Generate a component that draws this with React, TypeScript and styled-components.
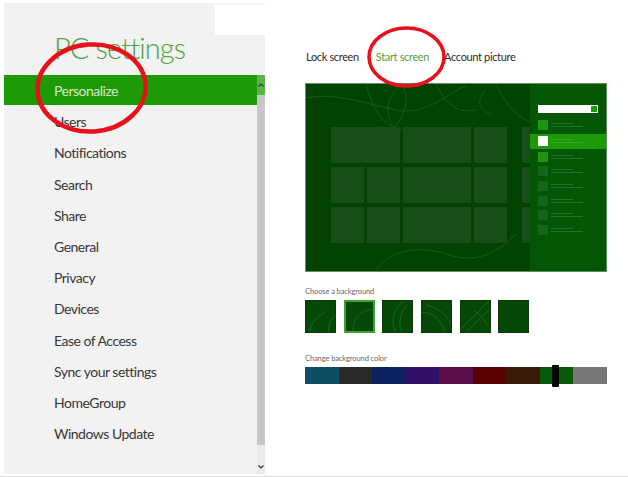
import React from "react";
import styled, { createGlobalStyle, css } from "styled-components";

const GlobalStyle = createGlobalStyle`
  html, body {
    margin: 0;
    padding: 0;
    background: #ffffff;
  }
  #root {
    width: 628px;
    height: 477px;
    overflow: hidden;
  }
`;

const UI_FONT = `"Lato", "Open Sans", "Noto Sans", sans-serif`;

const Page = styled.div`
  position: relative;
  width: 628px;
  height: 477px;
  display: flex;
  align-items: flex-start;
  border-bottom: 1px solid #dcdcdc;
  box-sizing: border-box;
  font-family: ${UI_FONT};
`;

/* ---------- left navigation ---------- */

const Sidebar = styled.aside`
  position: relative;
  margin: 3px 0 0 4px;
  width: 261px;
  height: 471px;
  background: #f2f2f2;
  display: flex;
  flex-direction: column;
`;

const Patch = styled.div`
  position: absolute;
  top: 2px;
  left: 211px;
  width: 52px;
  height: 30px;
  background: #ffffff;
`;

const Title = styled.h1`
  margin: 0;
  height: 72px;
  padding-left: 50px;
  box-sizing: border-box;
  font-family: ${UI_FONT};
  font-weight: 300;
  font-size: 29px;
  letter-spacing: -0.9px;
  line-height: 1;
  color: #4ea43c;
  display: flex;
  align-items: flex-end;
  padding-bottom: 13px;
`;

const NavBody = styled.div`
  flex: 1;
  display: flex;
`;

const NavList = styled.ul`
  flex: 1;
  margin: 0;
  padding: 0;
  list-style: none;
`;

const NavItem = styled.li<{ $active?: boolean }>`
  height: 31.2px;
  display: flex;
  align-items: center;
  padding-left: 50px;
  font-size: 14px;
  letter-spacing: -0.5px;
  color: #383838;
  ${({ $active }) =>
    $active &&
    css`
      background: #1e9a06;
      color: #d2eac6;
      height: 30px;
      margin-bottom: 1.2px;
    `}
`;

const Scrollbar = styled.div`
  width: 8px;
  display: flex;
  flex-direction: column;
  background: #ebebeb;
`;

const ScrollArrow = styled.div<{ $top?: boolean }>`
  height: ${({ $top }) => ($top ? "20px" : "29px")};
  display: flex;
  align-items: ${({ $top }) => ($top ? "center" : "flex-end")};
  justify-content: center;
  padding-bottom: ${({ $top }) => ($top ? "0" : "5px")};
  box-sizing: border-box;
  background: ${({ $top }) => ($top ? "#5fb34c" : "transparent")};

  svg {
    width: 6px;
    height: 4px;
  }
`;

const ScrollThumb = styled.div`
  flex: 1;
  background: #c6c6c6;
`;

/* ---------- right content ---------- */

const Content = styled.main`
  margin-left: 40px;
  padding-top: 48px;
  width: 302px;
  display: flex;
  flex-direction: column;
`;

const Tabs = styled.nav`
  display: flex;
  gap: 17px;
  height: 16px;
  align-items: center;
  margin-bottom: 19px;
  margin-left: 1px;
`;

const Tab = styled.span<{ $active?: boolean }>`
  font-size: 11px;
  letter-spacing: -0.35px;
  color: ${({ $active }) => ($active ? "#4ea43c" : "#2b2b2b")};
  &:nth-child(3) {
    margin-left: -2px;
  }
`;

const Preview = styled.div`
  width: 302px;
  height: 189px;
  display: flex;
  box-sizing: border-box;
  border: 1px solid #5f8f5f;
  overflow: hidden;
`;

const StartArea = styled.div`
  position: relative;
  width: 224px;
  background: #024202;
  overflow: hidden;
  padding: 43px 0 0 25px;
  box-sizing: border-box;
`;

const Swirls = styled.svg`
  position: absolute;
  inset: 0;
  width: 100%;
  height: 100%;
`;

const TileGrid = styled.div`
  position: relative;
  display: grid;
  grid-template-columns: 33px 33px 68px 33px 9px 33px;
  grid-auto-rows: 36px;
  gap: 4px 3px;
`;

const Tile = styled.div<{ $span?: number; $col?: number }>`
  background: #174f19;
  ${({ $span }) => $span && css`grid-column: span ${$span};`}
  ${({ $col }) => $col && css`grid-column-start: ${$col};`}
`;

const SidePane = styled.div`
  flex: 1;
  background: #035603;
  padding-top: 21px;
  display: flex;
  flex-direction: column;
`;

const SearchBox = styled.div`
  margin: 0 8px 5px 8px;
  height: 8px;
  background: #ffffff;
  display: flex;
  justify-content: flex-end;
  padding: 1px;
  box-sizing: border-box;

  span {
    width: 6px;
    background: #1e9a10;
  }
`;

const AppRow = styled.div<{ $state: "on" | "selected" | "off" }>`
  height: 14.6px;
  display: flex;
  align-items: center;
  gap: 3px;
  padding-left: 8px;
  ${({ $state }) =>
    $state === "selected" &&
    css`
      background: #1d9a08;
      height: 15px;
      margin: 1px 0;
    `}
`;

const AppIcon = styled.div<{ $state: "on" | "selected" | "off" }>`
  width: 10px;
  height: 10px;
  background: ${({ $state }) =>
    $state === "selected" ? "#ffffff" : $state === "on" ? "#1e9410" : "#13671a"};
`;

const AppText = styled.div`
  display: flex;
  flex-direction: column;
  gap: 2px;

  i {
    display: block;
    height: 1px;
    background: rgba(150, 200, 150, 0.25);
  }
  i:first-child {
    width: 22px;
  }
  i:last-child {
    width: 32px;
  }
`;

const Caption = styled.div<{ $gap?: number }>`
  margin-top: ${({ $gap }) => $gap ?? 0}px;
  font-size: 7.5px;
  color: #666666;
  letter-spacing: -0.1px;
`;

const BackgroundRow = styled.div`
  display: flex;
  gap: 7.7px;
  margin: 4px 0 21px;
`;

const Thumb = styled.svg<{ $selected?: boolean }>`
  width: 31px;
  height: 33px;
  box-sizing: border-box;
  background: #064806;
  border: ${({ $selected }) => ($selected ? "2px solid #3fa42b" : "1px solid #0a3a0a")};
`;

const ColorBar = styled.div`
  position: relative;
  margin-top: 4px;
  display: grid;
  grid-template-columns: repeat(9, 1fr);
  height: 17px;
`;

const Swatch = styled.div<{ $color: string }>`
  background: ${({ $color }) => $color};
`;

const Slider = styled.div`
  position: absolute;
  left: 247px;
  top: -2px;
  width: 7px;
  height: 22px;
  background: #050505;
  border-radius: 1px;
`;

const Marks = styled.svg`
  position: absolute;
  inset: 0;
  width: 628px;
  height: 477px;
  pointer-events: none;
`;

const navItems = [
  "Personalize",
  "Users",
  "Notifications",
  "Search",
  "Share",
  "General",
  "Privacy",
  "Devices",
  "Ease of Access",
  "Sync your settings",
  "HomeGroup",
  "Windows Update",
];

const appRows: Array<"on" | "selected" | "off"> = ["on", "selected", "on", "off", "off", "off", "off", "off"];

const swatches = [
  "#0d4e62",
  "#2a2a2a",
  "#0b2461",
  "#32106a",
  "#5b0f4b",
  "#5a0202",
  "#3b1a07",
  "#0a590a",
  "#787878",
];

const thumbCurves = [
  "M4 33 C6 20 14 16 20 12 M24 33 C24 22 28 18 31 16",
  "M8 33 C8 18 16 10 31 8",
  "M14 33 C8 22 10 10 22 0 M20 33 C16 24 18 12 26 4",
  "M0 12 C10 12 20 18 24 33 M4 4 C14 6 24 12 31 24",
  "M0 30 L30 0 M6 33 L31 8 M14 10 C20 14 26 20 28 26",
  "",
];

const Chevron: React.FC<{ up?: boolean }> = ({ up }) => (
  <svg viewBox="0 0 6 4">
    <path
      d={up ? "M0.5 3.5 L3 1 L5.5 3.5" : "M0.5 0.5 L3 3 L5.5 0.5"}
      fill="none"
      stroke="#333"
      strokeWidth="1.2"
    />
  </svg>
);

export default function App() {
  return (
    <>
      <GlobalStyle />
      <Page>
        <Sidebar>
          <Patch />
          <Title>PC settings</Title>
          <NavBody>
            <NavList>
              {navItems.map((item, i) => (
                <NavItem key={item} $active={i === 0}>
                  {item}
                </NavItem>
              ))}
            </NavList>
            <Scrollbar>
              <ScrollArrow $top>
                <Chevron up />
              </ScrollArrow>
              <ScrollThumb />
              <ScrollArrow>
                <Chevron />
              </ScrollArrow>
            </Scrollbar>
          </NavBody>
        </Sidebar>

        <Content>
          <Tabs>
            <Tab>Lock screen</Tab>
            <Tab $active>Start screen</Tab>
            <Tab>Account picture</Tab>
          </Tabs>

          <Preview>
            <StartArea>
              <Swirls viewBox="0 0 224 187" fill="none" stroke="#1a5a1a" strokeWidth="1">
                <path d="M0 14 C30 8 60 20 90 26 C120 32 140 10 160 2" />
                <path d="M60 0 C66 20 72 40 96 46" />
                <path d="M96 0 C80 12 78 30 88 44 C100 30 104 14 96 0" />
                <path d="M130 0 C140 20 150 30 170 26 M180 6 C170 14 172 28 186 30" />
                <path d="M190 0 C200 20 212 34 224 38" />
                <path d="M70 187 C80 168 110 160 140 170 C170 180 190 170 210 150" />
              </Swirls>
              <TileGrid>
                <Tile $span={2} />
                <Tile />
                <Tile />
                <Tile $col={6} />
                <Tile />
                <Tile />
                <Tile />
                <Tile />
                <Tile $col={6} />
                <Tile />
                <Tile />
                <Tile />
                <Tile />
                <Tile $col={6} />
              </TileGrid>
            </StartArea>
            <SidePane>
              <SearchBox>
                <span />
              </SearchBox>
              {appRows.map((state, i) => (
                <AppRow key={i} $state={state}>
                  <AppIcon $state={state} />
                  <AppText>
                    <i />
                    <i />
                  </AppText>
                </AppRow>
              ))}
            </SidePane>
          </Preview>

          <Caption $gap={15}>Choose a background</Caption>
          <BackgroundRow>
            {thumbCurves.map((d, i) => (
              <Thumb key={i} $selected={i === 1} viewBox="0 0 31 33">
                {d && <path d={d} fill="none" stroke="#1f6a1f" strokeWidth="1" />}
              </Thumb>
            ))}
          </BackgroundRow>

          <Caption>Change background color</Caption>
          <ColorBar>
            {swatches.map((c) => (
              <Swatch key={c} $color={c} />
            ))}
            <Slider />
          </ColorBar>
        </Content>

        <Marks viewBox="0 0 628 477">
          <ellipse cx="91.5" cy="88" rx="54" ry="43.5" fill="none" stroke="#e8111b" strokeWidth="4.5" transform="rotate(-4 91.5 88)" />
          <ellipse cx="406.5" cy="57" rx="37.5" ry="29" fill="none" stroke="#e8111b" strokeWidth="3.5" />
        </Marks>
      </Page>
    </>
  );
}
